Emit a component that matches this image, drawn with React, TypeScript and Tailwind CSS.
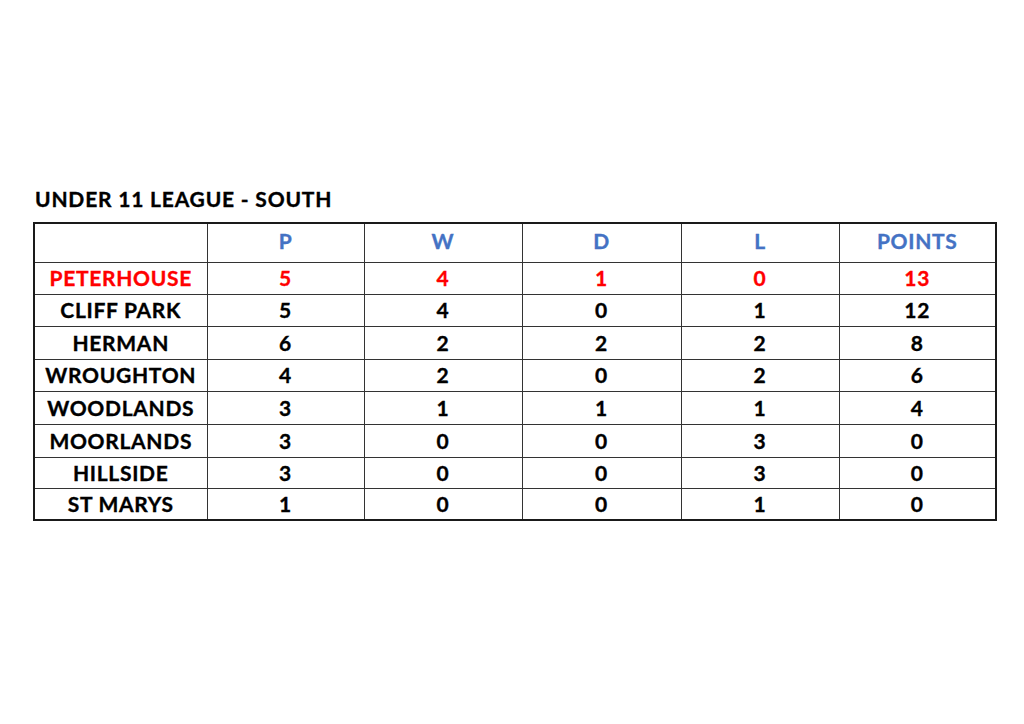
import React from "react";

const rows: [string, number, number, number, number, number][] = [
  ["PETERHOUSE", 5, 4, 1, 0, 13],
  ["CLIFF PARK", 5, 4, 0, 1, 12],
  ["HERMAN", 6, 2, 2, 2, 8],
  ["WROUGHTON", 4, 2, 0, 2, 6],
  ["WOODLANDS", 3, 1, 1, 1, 4],
  ["MOORLANDS", 3, 0, 0, 3, 0],
  ["HILLSIDE", 3, 0, 0, 3, 0],
  ["ST MARYS", 1, 0, 0, 1, 0],
];
const heights = [32, 32, 33, 32, 33, 33, 31, 32];

export default function App() {
  return (
    <div
      className="w-[1024px] h-[724px] bg-white text-black pl-[33px] pt-[184px] [-webkit-text-stroke:0.35px_currentColor]"
      style={{ fontFamily: "Lato, 'Open Sans', sans-serif" }}
    >
      <div className="pl-[2px] h-[38px] text-[21px] font-bold leading-[30px] tracking-[0.8px]">
        UNDER 11 LEAGUE - SOUTH
      </div>
      <table className="table-fixed border-collapse border-2 border-[#1a1a1a] w-[962px] text-[21px] font-bold tracking-[0.7px]">
        <colgroup>
          <col className="w-[173px]" />
          <col className="w-[157px]" />
          <col className="w-[158px]" />
          <col className="w-[159px]" />
          <col className="w-[158px]" />
          <col className="w-[157px]" />
        </colgroup>
        <thead>
          <tr className="h-[39px] text-[#4472c4]">
            <th className="border border-[#333] p-0 pb-[4px]"></th>
            <th className="border border-[#333] p-0 pb-[4px] font-bold">P</th>
            <th className="border border-[#333] p-0 pb-[4px] font-bold">W</th>
            <th className="border border-[#333] p-0 pb-[4px] font-bold">D</th>
            <th className="border border-[#333] p-0 pb-[4px] font-bold">L</th>
            <th className="border border-[#333] p-0 pb-[4px] font-bold">POINTS</th>
          </tr>
        </thead>
        <tbody>
          {rows.map((r, i) => (
            <tr
              key={r[0]}
              style={{ height: heights[i] }}
              className={i === 0 ? "text-[#ff0000]" : "text-black"}
            >
              {r.map((c, j) => (
                <td key={j} className="border border-[#333] p-0 pb-[1px] text-center leading-none">
                  {c}
                </td>
              ))}
            </tr>
          ))}
        </tbody>
      </table>
    </div>
  );
}
